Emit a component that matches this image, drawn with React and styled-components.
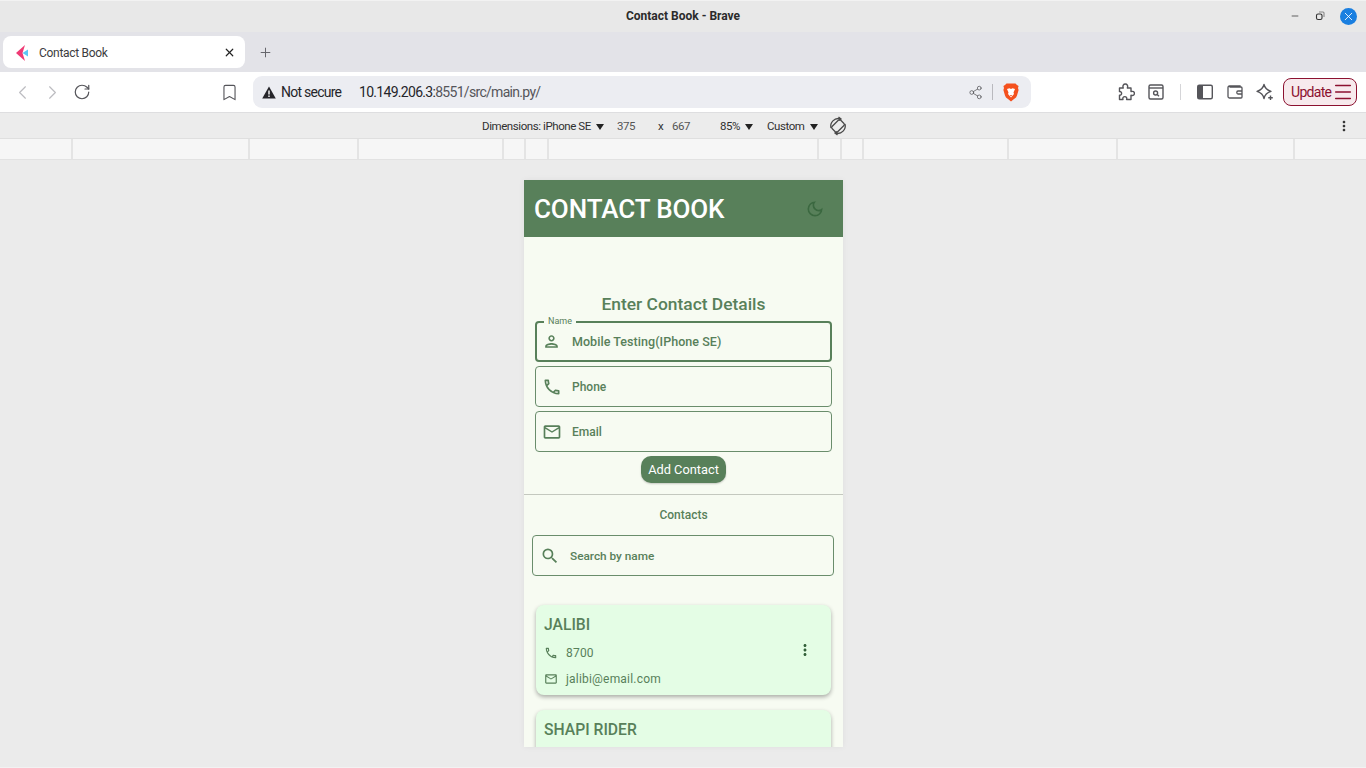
import React from "react";
import styled, { createGlobalStyle } from "styled-components";
import {
  ChevronLeft,
  ChevronRight,
  RotateCw,
  Bookmark,
  Share2,
  Plus,
  X,
  Minus,
  Menu,
} from "lucide-react";
import {
  MdOutlinePerson,
  MdOutlineCall,
  MdMailOutline,
  MdSearch,
  MdMoreVert,
  MdOutlineDarkMode,
} from "react-icons/md";

const GREEN = "#58805a";

const GlobalStyle = createGlobalStyle`
  html, body {
    margin: 0;
    padding: 0;
    height: 100%;
    overflow: hidden;
    background: #ebebeb;
    font-family: Roboto, "Liberation Sans", sans-serif;
  }
`;

const Window = styled.div`
  width: 1366px;
  height: 768px;
  display: flex;
  flex-direction: column;
  overflow: hidden;
`;

const TitleBar = styled.div`
  height: 32px;
  flex: none;
  background: #e8e8e8;
  box-shadow: inset 0 1px 0 #f2f2f2;
  display: grid;
  grid-template-columns: 1fr auto 1fr;
  align-items: center;
`;

const Title = styled.div`
  grid-column: 2;
  font-size: 12px;
  font-weight: 700;
  color: #2b2b2b;
`;

const WindowButtons = styled.div`
  grid-column: 3;
  justify-self: end;
  display: flex;
  align-items: center;
  gap: 15px;
  padding-right: 9px;
  color: #333;
`;

const CloseCircle = styled.span`
  width: 17px;
  height: 17px;
  border-radius: 50%;
  background: #1a7fe0;
  color: #fff;
  display: flex;
  align-items: center;
  justify-content: center;
`;

const TabStrip = styled.div`
  height: 40px;
  flex: none;
  background: #e3e3e8;
  display: flex;
  align-items: center;
  padding-left: 3px;
`;

const Tab = styled.div`
  width: 242px;
  height: 32px;
  box-sizing: border-box;
  background: #fff;
  border-radius: 8px;
  display: flex;
  align-items: center;
  padding: 1px 9px 0 13px;
  font-size: 12px;
  color: #3c3c40;
`;

const TabLabel = styled.span`
  flex: 1;
  margin-left: 9px;
  letter-spacing: -0.3px;
`;

const NewTab = styled.div`
  margin-left: 13px;
  display: flex;
  color: #66666c;
`;

const Toolbar = styled.div`
  height: 41px;
  flex: none;
  box-sizing: border-box;
  background: #fff;
  border-bottom: 1px solid #dedee0;
  display: flex;
  align-items: center;
`;

const NavButton = styled.div`
  width: 30px;
  display: flex;
  align-items: center;
  justify-content: center;
  color: ${(p) => (p.$muted ? "#bcbcc0" : "#55555a")};
`;

const NavGroup = styled.div`
  display: flex;
  align-items: center;
  padding-left: 7px;
  width: 220px;
  box-sizing: border-box;
`;

const BookmarkSlot = styled.div`
  width: 33px;
  display: flex;
  align-items: center;
  color: #55555a;
`;

const Omnibox = styled.div`
  width: 778px;
  height: 32px;
  box-sizing: border-box;
  background: #ecedf2;
  border-radius: 9px;
  display: flex;
  align-items: center;
  padding: 0 12px 0 9px;
  font-size: 14px;
  color: #25252a;
`;

const NotSecure = styled.span`
  margin-left: 5px;
  width: 78px;
  letter-spacing: -0.75px;
`;

const Url = styled.span`
  flex: 1;
  letter-spacing: -0.7px;
`;

const UrlMuted = styled.span`
  color: #55555a;
`;

const OmniDivider = styled.span`
  width: 1px;
  height: 16px;
  background: #b9b9be;
  margin: 0 10px 0 9px;
`;

const ToolIcons = styled.div`
  display: flex;
  align-items: center;
  margin-left: 86px;
  color: #55555a;
  gap: 12px;
`;

const ToolDivider = styled.span`
  width: 1px;
  height: 16px;
  background: #d5d5d8;
  margin: 0 3px;
`;

const UpdateButton = styled.div`
  margin-left: 9px;
  width: 74px;
  height: 28px;
  box-sizing: border-box;
  border: 1px solid #8c1130;
  border-radius: 8px;
  background: #f7eaed;
  color: #8c1130;
  font-size: 14px;
  display: flex;
  align-items: center;
  justify-content: space-between;
  padding: 0 2px 0 7px;
  letter-spacing: -0.7px;
`;

const DeviceBar = styled.div`
  height: 26px;
  flex: none;
  box-sizing: border-box;
  background: #ececec;
  border-bottom: 1px solid #dfdfdf;
  display: flex;
  align-items: center;
  padding-left: 482px;
  font-size: 11.5px;
  color: #303030;
  letter-spacing: -0.42px;
`;

const Caret = styled.span`
  width: 0;
  height: 0;
  border-left: 4px solid transparent;
  border-right: 4px solid transparent;
  border-top: 6px solid #222;
  margin-left: 5px;
  margin-top: 2px;
`;

const DeviceItem = styled.div`
  display: flex;
  align-items: center;
  width: ${(p) => p.$w}px;
  color: ${(p) => p.$color || "inherit"};
`;

const RotateSlot = styled.div`
  display: flex;
  color: #4a4a4a;
`;

const DevMenu = styled.div`
  margin-left: auto;
  padding-right: 14px;
  display: flex;
  color: #333;
`;

const Ruler = styled.div`
  height: 21px;
  flex: none;
  box-sizing: border-box;
  background: #f6f6f6;
  border-bottom: 1px solid #e2e2e2;
  display: flex;
`;

const RulerCell = styled.div`
  flex: none;
  box-sizing: border-box;
  width: ${(p) => p.$w}px;
  border-right: 2px solid #e4e4e4;
`;

const Viewport = styled.div`
  flex: 1;
  min-height: 0;
  background: #ebebeb;
  border-bottom: 1px solid #f2f2f2;
  padding-top: 20px;
  display: flex;
  justify-content: center;
  padding-left: 1px;
`;

const Phone = styled.div`
  width: 319px;
  height: 567px;
  background: #f7fbf2;
  overflow: hidden;
  box-shadow: 0 0 6px rgba(0, 0, 0, 0.06);
  display: flex;
  flex-direction: column;
  & > * {
    flex: none;
  }
`;

const AppBar = styled.header`
  height: 57px;
  background: ${GREEN};
  display: flex;
  align-items: center;
  justify-content: space-between;
  padding: 0 18px 0 10px;
`;

const AppTitle = styled.h1`
  margin: 0;
  font-size: 26px;
  font-weight: 500;
  color: #fff;
  letter-spacing: -0.1px;
`;

const MoonIcon = styled(MdOutlineDarkMode)`
  color: #3b6840;
`;

const Form = styled.section`
  padding: 57px 11px 0;
  display: flex;
  flex-direction: column;
  align-items: stretch;
`;

const Heading = styled.h2`
  margin: 0 0 6px;
  height: 21px;
  line-height: 21px;
  text-align: center;
  font-size: 17.4px;
  font-weight: 500;
  color: ${GREEN};
`;

const Field = styled.div`
  position: relative;
  height: 41px;
  box-sizing: border-box;
  border: ${(p) => (p.$focused ? `2px solid ${GREEN}` : "1px solid #6a8d6c")};
  border-radius: 4px;
  display: flex;
  align-items: center;
  padding-left: ${(p) => (p.$focused ? 5 : 6)}px;
  font-size: 12px;
  font-weight: 500;
  color: ${GREEN};
  margin-bottom: 4px;
`;

const FieldIconSlot = styled.span`
  width: 30px;
  display: flex;
  align-items: center;
  flex: none;
`;

const FieldLabel = styled.span`
  position: absolute;
  left: 7px;
  top: -7px;
  background: #f7fbf2;
  padding: 0 4px;
  font-size: 9px;
  line-height: 11px;
  font-weight: 400;
`;

const FieldValue = styled.span`
  font-size: 12.5px;
  letter-spacing: 0.05px;
`;

const AddRow = styled.div`
  display: flex;
  justify-content: center;
`;

const AddButton = styled.button`
  width: 85px;
  height: 27px;
  border: 0;
  padding: 0;
  border-radius: 10px;
  background: ${GREEN};
  color: #fff;
  font-family: inherit;
  font-size: 12.8px;
  box-shadow: 0 1px 2px rgba(0, 0, 0, 0.2);
`;

const Divider = styled.hr`
  margin: 11px 0 0;
  border: 0;
  height: 1px;
  background: #c4c8bf;
`;

const ContactsLabel = styled.div`
  text-align: center;
  font-size: 12px;
  font-weight: 500;
  color: ${GREEN};
  margin-top: 13px;
  height: 14px;
  line-height: 14px;
`;

const SearchWrap = styled.div`
  padding: 13px 9px 0 8px;
`;

const SearchField = styled(Field)`
  margin-bottom: 0;
  padding-left: 7px;
  font-size: 11.8px;
`;

const List = styled.div`
  padding: 29px 12px 0;
  display: flex;
  flex-direction: column;
  gap: 15px;
`;

const Card = styled.article`
  flex: none;
  height: 90px;
  box-sizing: border-box;
  background: #e4fde5;
  border-radius: 8px;
  box-shadow: 0 2px 4px rgba(0, 0, 0, 0.32);
  padding: 10px 8px 0;
  display: flex;
  flex-direction: column;
  position: relative;
  color: ${GREEN};
`;

const CardName = styled.div`
  font-size: 15.7px;
  font-weight: 500;
  height: 20px;
  line-height: 20px;
`;

const CardRow = styled.div`
  display: flex;
  align-items: center;
  height: 16px;
  margin-top: 10px;
  font-size: 12px;
  letter-spacing: 0.2px;
`;

const CardIconSlot = styled.span`
  width: 22px;
  flex: none;
  display: flex;
`;

const CardMenu = styled.span`
  position: absolute;
  right: 17px;
  top: 36px;
  display: flex;
  color: #33603a;
`;

const RULER = [73, 177, 109, 145, 22, 23, 270, 23, 22, 145, 109, 177];

function FaviconMark() {
  return (
    <svg width="14" height="16" viewBox="0 0 14 16">
      <path d="M9 0 L0 8 L9 16 L6.5 8 Z" fill="#ef3a74" />
      <path d="M6.5 8 L12 4.5 L12 11.5 Z" fill="#5cc8f5" />
    </svg>
  );
}

function BraveMark() {
  return (
    <svg width="16" height="19" viewBox="0 0 16 19">
      <path
        d="M3.5 0.5 H12.5 L14 2 L15.6 3 L15 5 L15.6 7 L14 12.5 Q13.5 14.5 11 16 L8 18.5 L5 16 Q2.5 14.5 2 12.5 L0.4 7 L1 5 L0.4 3 L2 2 Z"
        fill="#f4511e"
      />
      <path
        d="M4 6 L6.5 5.2 L8 6 L9.5 5.2 L12 6 L10.5 9.5 L11 11 L8 14.5 L5 11 L5.5 9.5 Z"
        fill="#fff"
      />
      <path d="M6.8 12 H9.2 L8 13.4 Z" fill="#f4511e" />
    </svg>
  );
}

function RestoreIcon() {
  return (
    <svg width="10" height="10" viewBox="0 0 10 10" fill="none" stroke="#333" strokeWidth="1.1">
      <rect x="1.5" y="3" width="5.5" height="5.5" rx="1.6" />
      <path d="M4 1 H8 Q9 1 9 2 V6" stroke="#888" />
    </svg>
  );
}

function WarningIcon() {
  return (
    <svg width="14" height="13" viewBox="0 0 14 13">
      <path d="M7 0.5 L13.8 12.5 H0.2 Z" fill="#25252a" />
      <path d="M6.3 4.5 H7.7 V8.6 H6.3 Z M6.3 9.6 H7.7 V11 H6.3 Z" fill="#fff" />
    </svg>
  );
}

function PuzzleIcon() {
  return (
    <svg width="18" height="18" viewBox="0 0 18 18" fill="none" stroke="currentColor" strokeWidth="1.4" strokeLinejoin="round">
      <path d="M2.5 5 H6.3 C5.3 2.6 6.6 1 8.3 1 C10 1 11.3 2.6 10.3 5 H14 V8.6 C16.3 7.8 17.4 9 17.4 10.4 C17.4 11.8 16.3 13 14 12.2 V16.5 H9.6 C10.2 14.6 9.2 13.6 7.8 13.6 C6.4 13.6 5.4 14.6 6 16.5 H2.5 V12.2 C3.8 12.4 4.6 11.4 4.6 10.4 C4.6 9.4 3.8 8.4 2.5 8.6 Z" />
    </svg>
  );
}

function SearchTabIcon() {
  return (
    <svg width="18" height="18" viewBox="0 0 18 18" fill="none" stroke="currentColor" strokeWidth="1.4">
      <rect x="2" y="2" width="14" height="14" rx="1.5" />
      <path d="M2 5 H16" />
      <circle cx="8.6" cy="10" r="2" />
      <path d="M10.2 11.6 L12 13.2" />
    </svg>
  );
}

function SidebarIcon() {
  return (
    <svg width="18" height="18" viewBox="0 0 18 18" fill="none">
      <rect x="1.7" y="2.2" width="14.6" height="13.6" rx="1.5" stroke="currentColor" strokeWidth="1.4" />
      <rect x="2" y="2.5" width="5" height="13" fill="currentColor" />
    </svg>
  );
}

function WalletIcon() {
  return (
    <svg width="18" height="18" viewBox="0 0 18 18" fill="none" stroke="currentColor" strokeWidth="1.3">
      <path d="M14 4 V3 H3.5 Q2 3 2 4.5 V13.5 Q2 15 3.5 15 H15 Q16 15 16 14 V5 Q16 4 15 4 H3.5" />
      <path d="M16 8 H12 Q10.8 8 10.8 9.5 Q10.8 11 12 11 H16" />
    </svg>
  );
}

function SparkleIcon() {
  return (
    <svg width="18" height="18" viewBox="0 0 18 18" fill="none" stroke="currentColor" strokeWidth="1.4" strokeLinejoin="round">
      <path d="M8 1.5 C8.8 5 10.5 7 15 8.3 C10.5 9.6 8.8 11.6 8 15.5 C7.2 11.6 5.5 9.6 1 8.3 C5.5 7 7.2 5 8 1.5 Z" />
      <path d="M14.5 12.5 V17 M12.2 14.8 H16.8" />
    </svg>
  );
}

function RotateDeviceIcon() {
  return (
    <svg width="20" height="20" viewBox="0 0 20 20" fill="none" stroke="currentColor" strokeWidth="1.3">
      <rect x="6.2" y="4" width="7.6" height="12" rx="1.4" transform="rotate(45 10 10)" />
      <path d="M3 12 A7.6 7.6 0 0 1 12 2.7" />
      <path d="M17 8 A7.6 7.6 0 0 1 8 17.3" />
      <path d="M10.5 1 L13 2.9 L10.8 4.6" />
      <path d="M9.5 19 L7 17.1 L9.2 15.4" />
    </svg>
  );
}

function ContactCard({ name, phone, email }) {
  return (
    <Card>
      <CardName>{name}</CardName>
      {phone && (
        <>
          <CardRow>
            <CardIconSlot>
              <MdOutlineCall size={14} />
            </CardIconSlot>
            {phone}
          </CardRow>
          <CardRow>
            <CardIconSlot>
              <MdMailOutline size={14} />
            </CardIconSlot>
            {email}
          </CardRow>
          <CardMenu>
            <MdMoreVert size={18} />
          </CardMenu>
        </>
      )}
    </Card>
  );
}

export default function App() {
  return (
    <>
      <GlobalStyle />
      <Window>
        <TitleBar>
          <Title>Contact Book - Brave</Title>
          <WindowButtons>
            <Minus size={10} strokeWidth={1.8} />
            <RestoreIcon />
            <CloseCircle>
              <X size={13} strokeWidth={1.6} />
            </CloseCircle>
          </WindowButtons>
        </TitleBar>

        <TabStrip>
          <Tab>
            <FaviconMark />
            <TabLabel>Contact Book</TabLabel>
            <X size={13} strokeWidth={2.2} color="#222" />
          </Tab>
          <NewTab>
            <Plus size={15} strokeWidth={1.6} />
          </NewTab>
        </TabStrip>

        <Toolbar>
          <NavGroup>
            <NavButton $muted>
              <ChevronLeft size={23} strokeWidth={1.2} />
            </NavButton>
            <NavButton $muted>
              <ChevronRight size={23} strokeWidth={1.2} />
            </NavButton>
            <NavButton>
              <RotateCw size={18} strokeWidth={1.6} />
            </NavButton>
          </NavGroup>
          <BookmarkSlot>
            <Bookmark size={19} strokeWidth={1.4} />
          </BookmarkSlot>
          <Omnibox>
            <WarningIcon />
            <NotSecure>Not secure</NotSecure>
            <Url>
              10.149.206.3:<UrlMuted>8551/src/main.py/</UrlMuted>
            </Url>
            <Share2 size={15} strokeWidth={1.2} color="#55555a" />
            <OmniDivider />
            <BraveMark />
          </Omnibox>
          <ToolIcons>
            <PuzzleIcon />
            <SearchTabIcon />
            <ToolDivider />
            <SidebarIcon />
            <WalletIcon />
            <SparkleIcon />
          </ToolIcons>
          <UpdateButton>
            Update
            <Menu size={22} strokeWidth={1.6} />
          </UpdateButton>
        </Toolbar>

        <DeviceBar>
          <DeviceItem $w={135}>
            Dimensions: iPhone SE
            <Caret />
          </DeviceItem>
          <DeviceItem $w={41} $color="#555">375</DeviceItem>
          <DeviceItem $w={14}>x</DeviceItem>
          <DeviceItem $w={48} $color="#555">667</DeviceItem>
          <DeviceItem $w={47}>
            85%
            <Caret />
          </DeviceItem>
          <DeviceItem $w={61}>
            Custom
            <Caret />
          </DeviceItem>
          <RotateSlot>
            <RotateDeviceIcon />
          </RotateSlot>
          <DevMenu>
            <MdMoreVert size={16} />
          </DevMenu>
        </DeviceBar>

        <Ruler>
          {RULER.map((w, i) => (
            <RulerCell key={i} $w={w} />
          ))}
        </Ruler>

        <Viewport>
          <Phone>
            <AppBar>
              <AppTitle>CONTACT BOOK</AppTitle>
              <MoonIcon size={20} />
            </AppBar>

            <Form>
              <Heading>Enter Contact Details</Heading>
              <Field $focused>
                <FieldLabel>Name</FieldLabel>
                <FieldIconSlot>
                  <MdOutlinePerson size={19} />
                </FieldIconSlot>
                <FieldValue>Mobile Testing(IPhone SE)</FieldValue>
              </Field>
              <Field>
                <FieldIconSlot>
                  <MdOutlineCall size={20} />
                </FieldIconSlot>
                Phone
              </Field>
              <Field>
                <FieldIconSlot>
                  <MdMailOutline size={20} />
                </FieldIconSlot>
                Email
              </Field>
              <AddRow>
                <AddButton>Add Contact</AddButton>
              </AddRow>
            </Form>

            <Divider />
            <ContactsLabel>Contacts</ContactsLabel>

            <SearchWrap>
              <SearchField>
                <FieldIconSlot>
                  <MdSearch size={20} />
                </FieldIconSlot>
                Search by name
              </SearchField>
            </SearchWrap>

            <List>
              <ContactCard name="JALIBI" phone="8700" email="jalibi@email.com" />
              <ContactCard name="SHAPI RIDER" />
            </List>
          </Phone>
        </Viewport>
      </Window>
    </>
  );
}
